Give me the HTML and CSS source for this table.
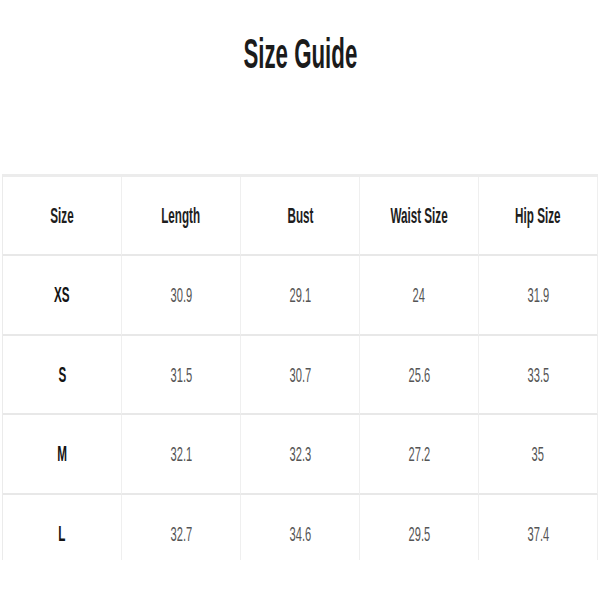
FILE: index.html
```html
<!DOCTYPE html>
<html lang="en">
<head>
<meta charset="utf-8">
<title>Size Guide</title>
<link rel="stylesheet" href="styles.css">
</head>
<body>
<div class="page">
  <header class="title-block">
    <h1 class="title"><span class="squeeze">Size Guide</span></h1>
  </header>
  <div class="table-wrap">
    <table class="size-table">
      <thead>
        <tr>
          <th><span class="squeeze">Size</span></th>
          <th><span class="squeeze">Length</span></th>
          <th><span class="squeeze">Bust</span></th>
          <th><span class="squeeze">Waist Size</span></th>
          <th><span class="squeeze">Hip Size</span></th>
        </tr>
      </thead>
      <tbody>
        <tr>
          <th class="size"><span class="squeeze">XS</span></th>
          <td><span class="squeeze">30.9</span></td>
          <td><span class="squeeze">29.1</span></td>
          <td><span class="squeeze">24</span></td>
          <td><span class="squeeze">31.9</span></td>
        </tr>
        <tr>
          <th class="size"><span class="squeeze">S</span></th>
          <td><span class="squeeze">31.5</span></td>
          <td><span class="squeeze">30.7</span></td>
          <td><span class="squeeze">25.6</span></td>
          <td><span class="squeeze">33.5</span></td>
        </tr>
        <tr>
          <th class="size"><span class="squeeze">M</span></th>
          <td><span class="squeeze">32.1</span></td>
          <td><span class="squeeze">32.3</span></td>
          <td><span class="squeeze">27.2</span></td>
          <td><span class="squeeze">35</span></td>
        </tr>
        <tr>
          <th class="size"><span class="squeeze">L</span></th>
          <td><span class="squeeze">32.7</span></td>
          <td><span class="squeeze">34.6</span></td>
          <td><span class="squeeze">29.5</span></td>
          <td><span class="squeeze">37.4</span></td>
        </tr>
      </tbody>
    </table>
  </div>
</div>
</body>
</html>
```

FILE: styles.css
```css
html, body {
  margin: 0;
  padding: 0;
  background: #ffffff;
}

body {
  font-family: "Liberation Sans", Arial, sans-serif;
  color: #1c1c1c;
}

.page {
  width: 600px;
}

.title-block {
  height: 174px;
  padding-top: 30px;
  box-sizing: border-box;
  text-align: center;
}

.title {
  margin: 0;
  font-size: 42px;
  line-height: 48px;
  font-weight: 700;
  color: #1b1b1b;
}

.squeeze {
  display: inline-block;
  transform: scaleX(0.53);
  white-space: nowrap;
}

.table-wrap {
  margin: 0 2px;
  height: 386px;
  overflow: hidden;
}

.size-table {
  width: 596px;
  table-layout: fixed;
  border-collapse: separate;
  border-spacing: 0;
  border-top: 3px solid #ececec;
  border-left: 1px solid #ebebeb;
}

.size-table th,
.size-table td {
  height: 77.7px;
  padding: 0;
  text-align: center;
  vertical-align: middle;
  border-right: 1px solid #efefef;
  border-bottom: 2px solid #e8e8e8;
}

.size-table thead th {
  height: 77px;
  font-size: 22px;
  font-weight: 700;
  color: #1e1e1e;
}

.size-table th.size {
  font-size: 22px;
  font-weight: 700;
  color: #141414;
}

.size-table td {
  font-size: 21px;
  font-weight: 400;
  color: #555555;
}
```
